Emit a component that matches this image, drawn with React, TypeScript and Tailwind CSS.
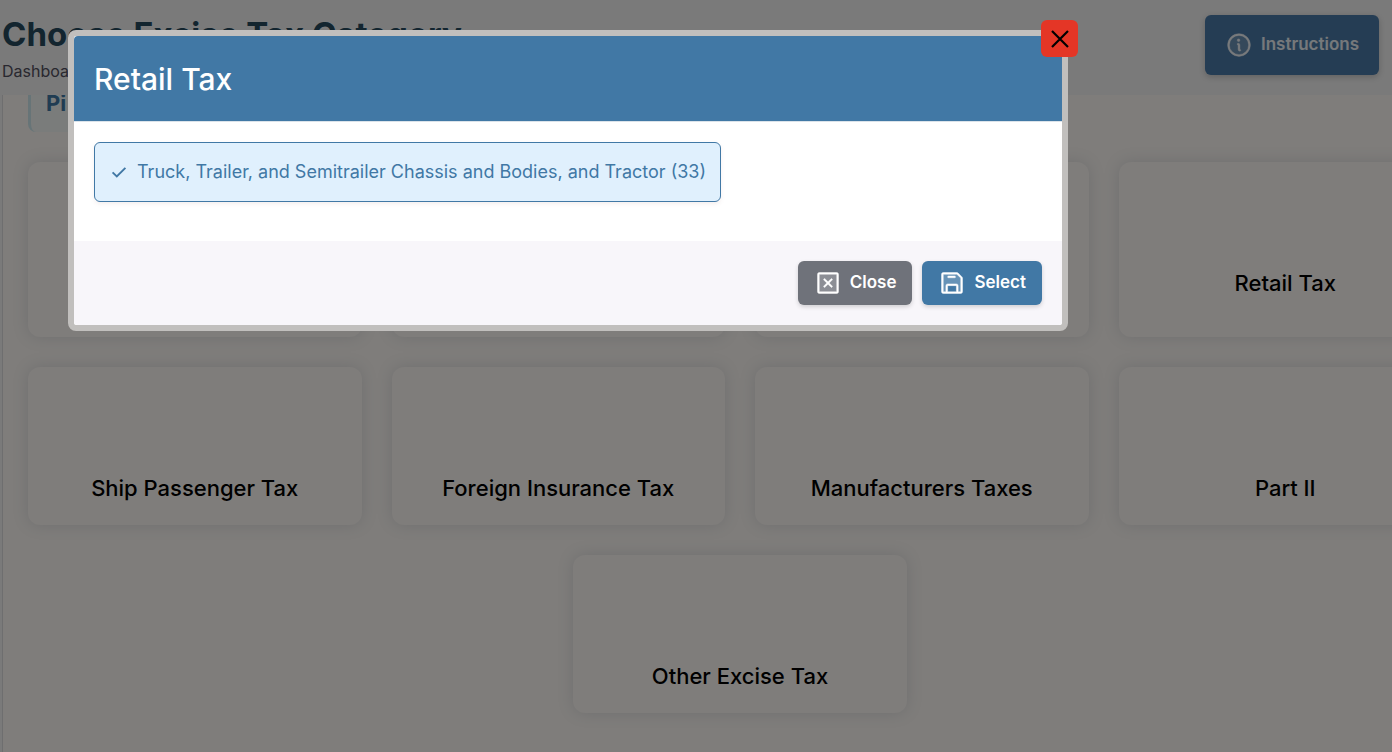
import { useState } from 'react';
import {
  PiFloppyDiskDuotone,
  PiInfoDuotone,
  PiXSquareDuotone,
} from 'react-icons/pi';

const firstRow = [
  { id: 'first', title: '' },
  { id: 'second', title: '' },
  { id: 'third', title: '' },
  { id: 'retail', title: 'Retail Tax' },
];

const secondRow = [
  { id: 'ship', title: 'Ship Passenger Tax' },
  { id: 'insurance', title: 'Foreign Insurance Tax' },
  { id: 'manufacturers', title: 'Manufacturers Taxes' },
  { id: 'part-two', title: 'Part II' },
];

function CategoryCard({ title }: { title: string }) {
  return (
    <article className="min-h-[158px] rounded-xl px-4 pt-[105px] text-center shadow-[0_0_16px_rgba(67,89,113,0.17)]">
      <h3 className="text-[22px] leading-8 font-medium text-black">{title}</h3>
    </article>
  );
}

function CategoryModal({ onClose }: { onClose: () => void }) {
  const [isSelected, setIsSelected] = useState(true);

  return (
    <div className="fixed inset-0 z-20 flex items-start justify-center bg-black/50 pt-[30px] pr-64">
      <div
        role="dialog"
        aria-modal="true"
        aria-labelledby="modal-title"
        className="relative w-full max-w-[1000px] rounded-lg border-6 border-[#c1bfbd] bg-white"
      >
        <button
          type="button"
          aria-label="Dismiss"
          onClick={onClose}
          className="absolute -top-4 -right-4 flex size-[37px] items-center justify-center rounded-md bg-[#e43626] text-black"
        >
          <svg viewBox="0 0 18 18" className="size-[18px]" aria-hidden="true">
            <path
              d="M1 1 17 17M17 1 1 17"
              fill="none"
              stroke="currentColor"
              strokeWidth="2.2"
            />
          </svg>
        </button>

        <header className="rounded-t-sm border-b border-[#dbe3ea] bg-[#4178a5] px-5 pt-[21px] pb-[19px]">
          <h2
            id="modal-title"
            className="text-[30px] leading-[45px] font-medium text-white"
          >
            Retail Tax
          </h2>
        </header>

        <div className="px-5 pt-5 pb-[39px]">
          <button
            type="button"
            aria-pressed={isSelected}
            onClick={() => setIsSelected(!isSelected)}
            className="flex h-[60px] items-center gap-2.5 rounded-md border border-[#4178a5] bg-[#e0f0fd] pr-3.5 pl-4 text-lg font-normal text-[#4178a5] shadow-[0_2px_4px_rgba(165,120,120,0.12)]"
          >
            <svg viewBox="0 0 16 16" className="size-4" aria-hidden="true">
              <path
                d="M1.6 8.4 5.8 12.4 14.4 3.8"
                fill="none"
                stroke="currentColor"
                strokeWidth="1.9"
              />
            </svg>
            Truck, Trailer, and Semitrailer Chassis and Bodies, and Tractor (33)
          </button>
        </div>

        <footer className="flex justify-end gap-2.5 rounded-b-sm bg-[#f8f6fa] p-5">
          <button
            type="button"
            onClick={onClose}
            className="flex h-11 items-center gap-2 rounded-md bg-[#6f727a] px-4 text-[17px] font-semibold text-white shadow-[0_2px_4px_rgba(0,0,0,0.16)]"
          >
            <PiXSquareDuotone className="size-7 stroke-current stroke-[4]" />
            Close
          </button>
          <button
            type="button"
            onClick={onClose}
            className="flex h-11 items-center gap-2 rounded-md bg-[#4178a5] px-4 text-[17px] font-semibold text-white shadow-[0_2px_4px_rgba(0,0,0,0.16)]"
          >
            <PiFloppyDiskDuotone className="size-7 stroke-current stroke-[4]" />
            Select
          </button>
        </footer>
      </div>
    </div>
  );
}

export default function App() {
  const [isModalOpen, setIsModalOpen] = useState(true);

  return (
    <div className="flex min-h-screen flex-col overflow-hidden bg-[#f4f4f4] font-['Inter','Liberation_Sans',sans-serif]">
      <header className="flex h-[95px] items-start justify-between pr-[13px] pl-0.5">
        <div className="pt-3">
          <h1 className="text-[33px] leading-[44px] font-bold text-[#264a5e]">
            Choose Excise Tax Category
          </h1>
          <nav aria-label="Breadcrumb">
            <a
              href="#dashboard"
              className="text-base leading-[30px] text-[#52505e]"
            >
              Dashboard
            </a>
          </nav>
        </div>
        <button
          type="button"
          className="mt-[15px] flex h-[60px] items-center gap-2 rounded-md bg-[#4a7aa8] px-5 text-[17px] font-semibold text-white/90 shadow-[0_2px_6px_rgba(0,0,0,0.2)]"
        >
          <PiInfoDuotone className="size-7 stroke-current stroke-[4]" />
          Instructions
        </button>
      </header>

      <main className="ml-0.5 grow border-l border-[#dcdcdf] bg-[#fefaf6] pl-[25px]">
        <div className="h-[37px] w-fit overflow-hidden rounded-bl-lg border-l-3 border-[#cfe9ee] bg-[#f4f8f7] px-[15px]">
          <p className="-mt-2 text-[22px] leading-8 font-bold text-[#4178a5]">
            Pi
          </p>
        </div>

        {/* the grid runs past the right edge of the window */}
        <div className="-mr-[60px] pt-[30px]">
          <div className="grid grid-cols-4 gap-x-[30px]">
            {firstRow.map((item) => (
              <div key={item.id} className="grid min-h-[175px]">
                <CategoryCard title={item.title} />
              </div>
            ))}
          </div>
          <div className="mt-[30px] grid grid-cols-4 gap-x-[30px]">
            {secondRow.map((item) => (
              <CategoryCard key={item.id} title={item.title} />
            ))}
          </div>
          <div className="mt-[30px] grid grid-cols-[334px] justify-center">
            <CategoryCard title="Other Excise Tax" />
          </div>
        </div>
      </main>

      {isModalOpen ? (
        <CategoryModal onClose={() => setIsModalOpen(false)} />
      ) : null}
    </div>
  );
}
